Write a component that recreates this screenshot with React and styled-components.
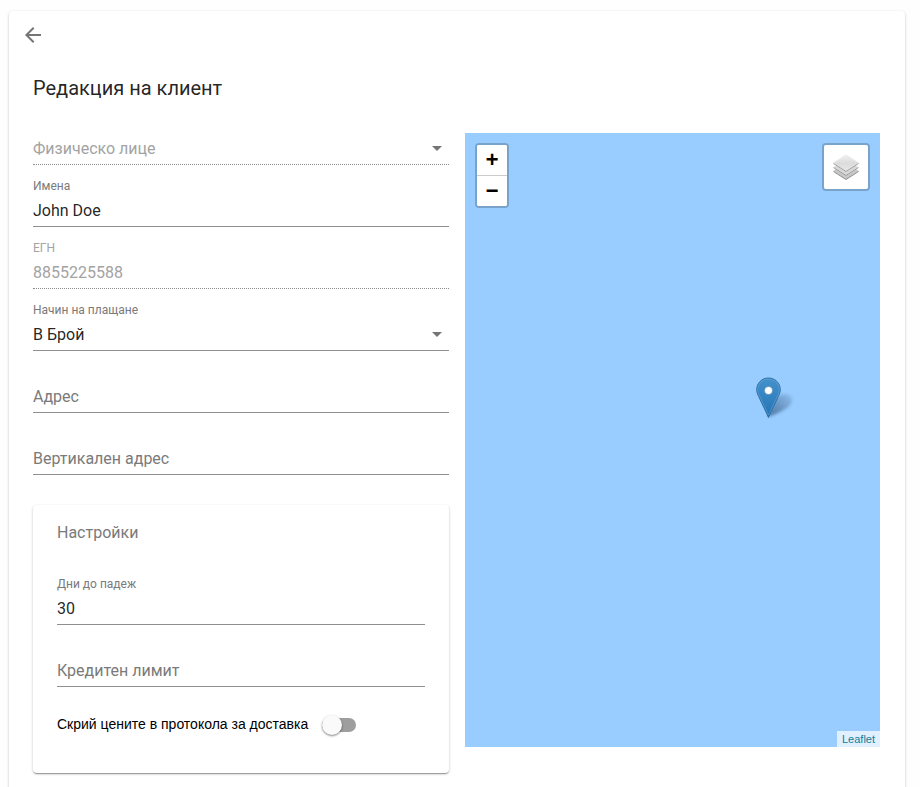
import React, { useState } from 'react';
import styled, { createGlobalStyle } from 'styled-components';

const GlobalStyle = createGlobalStyle`
	* {
		box-sizing: border-box;
	}

	body {
		margin: 0;
		background: #fefefe;
		color: rgba(0, 0, 0, 0.87);
		font-family: Roboto, sans-serif;
	}
`;

const Page = styled.div`
	height: 100vh;
	padding: 11px 15px 0 9px;
	overflow: hidden;
`;

const Card = styled.main`
	padding-bottom: 24px;
	background: white;
	border-radius: 4px;
	box-shadow: 0 2px 1px -1px rgba(0, 0, 0, 0.2), 0 1px 1px rgba(0, 0, 0, 0.14),
		0 1px 3px rgba(0, 0, 0, 0.2);
`;

const BackButton = styled.button`
	display: flex;
	align-items: center;
	justify-content: center;
	width: 48px;
	height: 48px;
	padding: 0;
	border: 0;
	background: none;
	color: #757575;
	cursor: pointer;
`;

const Title = styled.h1`
	margin: 0;
	padding: 13px 24px 12px;
	font-size: 20px;
	font-weight: 400;
	line-height: 32px;
`;

const Columns = styled.div`
	display: grid;
	grid-template-columns: 1fr 1fr;
	gap: 16px;
	margin-top: -13px;
	padding: 0 24px;
`;

const Field = styled.div`
	display: grid;
	grid-template-rows: 16px 32px;
	grid-template-columns: 1fr;
	padding-top: 13px;
	border-bottom: 1px ${({ $disabled }) => ($disabled ? 'dotted #8c8c8c' : 'solid #8f8f8f')};
`;

const FieldLabel = styled.label`
	grid-column: 1;
	grid-row: ${({ $resting }) => ($resting ? 2 : 1)};
	color: ${({ $disabled }) => ($disabled ? '#a3a3a3' : '#7a7a7a')};
	font-size: ${({ $resting }) => ($resting ? '16px' : '12px')};
	line-height: ${({ $resting }) => ($resting ? '34px' : '16px')};
	pointer-events: none;
`;

const Input = styled.input`
	grid-column: 1;
	grid-row: 2;
	width: 100%;
	padding: 0;
	border: 0;
	outline: 0;
	background: none;
	color: rgba(0, 0, 0, 0.87);
	font: 16px Roboto, sans-serif;

	&:disabled {
		color: #a3a3a3;
	}
`;

const SelectWrap = styled.div`
	grid-row: 2;
	display: grid;
	align-items: center;

	svg {
		grid-area: 1 / 1;
		justify-self: end;
		margin-right: 7px;
		fill: #757575;
		pointer-events: none;
	}
`;

const Select = styled.select`
	grid-area: 1 / 1;
	width: 100%;
	height: 32px;
	padding: 0;
	border: 0;
	outline: 0;
	appearance: none;
	background: none;
	color: rgba(0, 0, 0, 0.87);
	font: 16px Roboto, sans-serif;

	&:disabled {
		color: #a3a3a3;
		opacity: 1;
	}
`;

const Settings = styled.section`
	margin-top: 30px;
	padding: 16px 24px 34px;
	background: white;
	border-radius: 4px;
	box-shadow: 0 2px 1px -1px rgba(0, 0, 0, 0.2), 0 1px 1px rgba(0, 0, 0, 0.14),
		0 1px 3px rgba(0, 0, 0, 0.2);
`;

const SettingsTitle = styled.h2`
	margin: 0 0 18px;
	color: #7a7a7a;
	font-size: 16px;
	font-weight: 400;
	line-height: 24px;
`;

const ToggleRow = styled.label`
	display: flex;
	align-items: center;
	gap: 14px;
	padding-top: 22px;
	color: black;
	font-family: 'Liberation Sans', Arial, sans-serif;
	font-size: 14px;
	line-height: 30px;
	cursor: pointer;
`;

const Toggle = styled.input`
	display: flex;
	align-items: center;
	flex-shrink: 0;
	width: 34px;
	height: 14px;
	margin: 2px 0 0;
	appearance: none;
	border-radius: 7px;
	background: #9e9e9e;
	cursor: pointer;

	&::before {
		content: '';
		width: 20px;
		height: 20px;
		border-radius: 50%;
		background: #fafafa;
		box-shadow: 0 1px 2px rgba(0, 0, 0, 0.4), 0 1px 3px rgba(0, 0, 0, 0.12);
	}

	&:checked {
		justify-content: flex-end;
	}
`;

const Map = styled.section`
	position: relative;
	display: flex;
	flex-direction: column;
	justify-content: space-between;
	margin: 30px 1px 26px 0;
	background: #99ccff;
	font-family: 'Liberation Sans', Arial, sans-serif;
`;

const Controls = styled.div`
	display: flex;
	align-items: flex-start;
	justify-content: space-between;
	padding: 10px;
`;

const ControlBox = styled.div`
	overflow: hidden;
	border: 2px solid rgba(0, 0, 0, 0.2);
	border-radius: 4px;
	background: white;
	background-clip: padding-box;
`;

const ZoomButton = styled.button`
	display: block;
	width: 30px;
	height: 30px;
	padding: 3px 0 0;
	border: 0;
	background: white;
	color: black;
	font: bold 22px/27px 'Liberation Mono', monospace;
	cursor: pointer;

	& + & {
		height: 31px;
		border-top: 1px solid #cccccc;
	}
`;

const LayersButton = styled.button`
	display: flex;
	align-items: center;
	justify-content: center;
	width: 44px;
	height: 44px;
	padding: 0;
	border: 0;
	background: white;
	cursor: pointer;
`;

const Pin = styled.svg`
	position: absolute;
	top: 40%;
	left: 70%;
	margin-top: -2px;
`;

const Attribution = styled.div`
	align-self: flex-end;
	padding: 0 5px;
	background: rgba(255, 255, 255, 0.7);
	font-size: 11px;
	line-height: 16px;

	a {
		color: #0b7f9c;
		text-decoration: none;
	}
`;

const TextField = ({ id, label, value = '', disabled }) => {
	const [text, setText] = useState(value);

	return (
		<Field $disabled={disabled}>
			<FieldLabel htmlFor={id} $resting={!text} $disabled={disabled}>
				{label}
			</FieldLabel>
			<Input
				id={id}
				value={text}
				disabled={disabled}
				onChange={(e) => setText(e.target.value)}
			/>
		</Field>
	);
};

const SelectField = ({ id, label, name, options, disabled }) => (
	<Field $disabled={disabled}>
		{label && <FieldLabel htmlFor={id}>{label}</FieldLabel>}
		<SelectWrap>
			<Select id={id} aria-label={name} disabled={disabled}>
				{options.map((option) => (
					<option key={option}>{option}</option>
				))}
			</Select>
			<svg width="10" height="6" viewBox="0 0 10 6">
				<path d="M0 1h10L5 6z" />
			</svg>
		</SelectWrap>
	</Field>
);

const LayersIcon = () => (
	<svg width="26" height="26" viewBox="0 0 26 26">
		<defs>
			<linearGradient id="sheet" x1="0" y1="0" x2="0" y2="1">
				<stop offset="0" stopColor="#f0f0f0" />
				<stop offset="0.5" stopColor="#dcdcdc" />
				<stop offset="1" stopColor="#e6e6e6" />
			</linearGradient>
		</defs>
		<path d="M0 17l13-8 13 8-13 8.500z" fill="#c8c8c8" />
		<path d="M0.500 17.500l12.500 8 12.500-8" fill="none" stroke="#8f8f8f" />
		<path d="M0 13l13-8 13 8-13 8.500z" fill="#d8d8d8" stroke="white" />
		<path d="M0.500 13.500L13 21.500l12.500-8" fill="none" stroke="#959595" />
		<path d="M0 9l13-8 13 8-13 8.500z" fill="url(#sheet)" stroke="white" />
		<path d="M0.500 9.500L13 17.500l12.500-8" fill="none" stroke="#999999" />
		<path d="M0 9l13-8 13 8" fill="none" stroke="#d4d4d4" strokeWidth="0.5" />
	</svg>
);

const MapPin = () => (
	<Pin width="41" height="42" viewBox="0 0 41 42" role="img" aria-label="Marker">
		<defs>
			<linearGradient id="pin" x1="0" y1="0" x2="0" y2="1">
				<stop offset="0" stopColor="#4391cc" />
				<stop offset="1" stopColor="#2673b4" />
			</linearGradient>
			<linearGradient id="shade" x1="0" y1="1" x2="1" y2="0">
				<stop offset="0" stopColor="#274b70" stopOpacity="0.7" />
				<stop offset="1" stopColor="#274b70" stopOpacity="0.1" />
			</linearGradient>
			<filter id="blur" x="-30%" y="-30%" width="160%" height="160%">
				<feGaussianBlur stdDeviation="1.5" />
			</filter>
		</defs>
		<path
			d="M12 40L19 23C24 15 35 16 36 22C37 28 29 34 12 40Z"
			fill="url(#shade)"
			filter="url(#blur)"
		/>
		<path
			d="M12.5 1C5.9 1 .7 6.2.7 12.7c0 2.4.8 4.4 2 6.8l9.8 21 9.8-21c1.2-2.4 2-4.4 2-6.8C24.3 6.2 19.1 1 12.5 1z"
			fill="url(#pin)"
			stroke="#2f70a6"
		/>
		<path
			d="M12.5 2C6.5 2 1.7 6.7 1.7 12.7c0 2.2.8 4.2 1.9 6.4l8.9 19 8.9-19c1.1-2.2 1.9-4.2 1.9-6.4C23.3 6.7 18.5 2 12.5 2z"
			fill="none"
			stroke="#8dc4ef"
			opacity="0.3"
		/>
		<circle cx="12.5" cy="13.5" r="4" fill="white" stroke="#2f70a6" strokeWidth="0.5" />
	</Pin>
);

const App = () => {
	const [hidePrices, setHidePrices] = useState(false);

	return (
		<Page>
			<GlobalStyle />
			<Card>
				<BackButton aria-label="Назад">
					<svg width="24" height="24" viewBox="0 0 24 24" fill="currentColor">
						<path d="M20 11H7.83l5.59-5.59L12 4l-8 8 8 8 1.41-1.41L7.83 13H20v-2z" />
					</svg>
				</BackButton>
				<Title>Редакция на клиент</Title>
				<Columns>
					<form>
						<SelectField
							id="type"
							name="Вид клиент"
							options={['Физическо лице']}
							disabled
						/>
						<TextField id="names" label="Имена" value="John Doe" />
						<TextField id="egn" label="ЕГН" value="8855225588" disabled />
						<SelectField id="payment" label="Начин на плащане" options={['В Брой']} />
						<TextField id="address" label="Адрес" />
						<TextField id="vertical" label="Вертикален адрес" />
						<Settings>
							<SettingsTitle>Настройки</SettingsTitle>
							<TextField id="days" label="Дни до падеж" value="30" />
							<TextField id="credit" label="Кредитен лимит" />
							<ToggleRow>
								Скрий цените в протокола за доставка
								<Toggle
									type="checkbox"
									role="switch"
									checked={hidePrices}
									onChange={(e) => setHidePrices(e.target.checked)}
								/>
							</ToggleRow>
						</Settings>
					</form>
					<Map>
						<Controls>
							<ControlBox>
								<ZoomButton aria-label="Zoom in">+</ZoomButton>
								<ZoomButton aria-label="Zoom out">−</ZoomButton>
							</ControlBox>
							<ControlBox>
								<LayersButton aria-label="Layers">
									<LayersIcon />
								</LayersButton>
							</ControlBox>
						</Controls>
						<MapPin />
						<Attribution>
							<a href="#leaflet">Leaflet</a>
						</Attribution>
					</Map>
				</Columns>
			</Card>
		</Page>
	);
};

export default App;
